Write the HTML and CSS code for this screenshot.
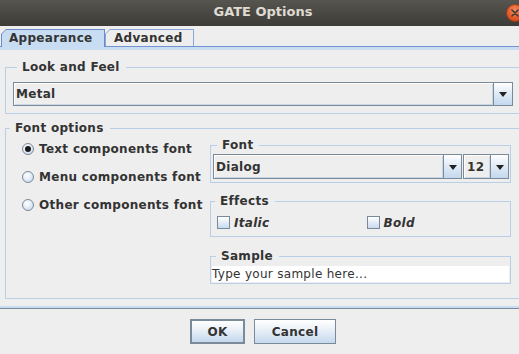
FILE: index.html
```html
<!DOCTYPE html>
<html>
<head>
<meta charset="utf-8">
<link rel="stylesheet" href="styles.css">
</head>
<body>
<div class="window">
  <div class="titlebar">
    <span></span>
    <span class="title">GATE Options</span>
    <span class="close-wrap">
      <svg class="close" width="18" height="18" viewBox="0 0 18 18">
        <defs>
          <radialGradient id="cg" cx="50%" cy="35%" r="60%">
            <stop offset="0" stop-color="#f7895c"/>
            <stop offset="1" stop-color="#dc4a1a"/>
          </radialGradient>
        </defs>
        <circle cx="9" cy="9" r="8.5" fill="url(#cg)" stroke="#9b3a17" stroke-width="0.8"/>
        <path d="M6 6 L12 12 M12 6 L6 12" stroke="#3c3b37" stroke-width="1.6" stroke-linecap="round"/>
      </svg>
    </span>
  </div>

  <div class="tabstrip">
    <div class="tab selected"><div class="tab-in">Appearance</div></div>
    <div class="tab"><div class="tab-in">Advanced</div></div>
  </div>
  <div class="tabline"></div>

  <div class="tabbody">
    <fieldset class="group lnf">
      <legend>Look and Feel</legend>
      <div class="combo">
        <div class="combo-text">Metal</div>
        <div class="combo-btn"><span class="tri"></span></div>
      </div>
    </fieldset>

    <fieldset class="group fontopts">
      <legend>Font options</legend>
      <div class="fo-body">
        <div class="radios">
          <div class="radio-row"><span class="radio checked"></span><span>Text components font</span></div>
          <div class="radio-row"><span class="radio"></span><span>Menu components font</span></div>
          <div class="radio-row"><span class="radio"></span><span>Other components font</span></div>
        </div>
        <div class="rightcol">
          <fieldset class="group sub font">
            <legend>Font</legend>
            <div class="font-row">
              <div class="combo tall dialog">
                <div class="combo-text">Dialog</div>
                <div class="combo-btn narrow"><span class="tri"></span></div>
              </div>
              <div class="combo tall size">
                <div class="combo-text">12</div>
                <div class="combo-btn narrow"><span class="tri"></span></div>
              </div>
            </div>
          </fieldset>
          <fieldset class="group sub effects">
            <legend>Effects</legend>
            <div class="effects-row">
              <div class="check-item"><span class="check"></span><span class="ital">Italic</span></div>
              <div class="check-item"><span class="check"></span><span class="ital">Bold</span></div>
            </div>
          </fieldset>
          <fieldset class="group sub sample">
            <legend>Sample</legend>
            <div class="sample-field">Type your sample here...</div>
          </fieldset>
        </div>
      </div>
    </fieldset>
  </div>
  <div class="bottomband"></div>

  <div class="buttons">
    <div class="btn default">OK</div>
    <div class="btn">Cancel</div>
  </div>
</div>
</body>
</html>
```

FILE: styles.css
```css
html, body {
  margin: 0;
  padding: 0;
  overflow: hidden;
  background: #eeeeee;
}
.window {
  width: 526px;
  height: 354px;
  background: #eeeeee;
  font-family: "DejaVu Sans", sans-serif;
  font-size: 12px;
  font-weight: bold;
  color: #333333;
  letter-spacing: 0.3px;
}

/* title bar */
.titlebar {
  height: 26px;
  display: grid;
  grid-template-columns: 1fr auto 1fr;
  align-items: center;
  background: linear-gradient(#57554f, #3c3b37);
}
.title {
  font-size: 13px;
  line-height: 24px;
  color: #dfdbd2;
  padding-bottom: 2px;
  letter-spacing: 0;
}
.close-wrap {
  justify-self: end;
  display: flex;
  margin-right: 2px;
}

/* tabs */
.tabstrip {
  height: 20px;
  display: flex;
  align-items: flex-end;
  padding-left: 1px;
}
.tab {
  height: 17px;
  box-sizing: border-box;
  padding: 1px 1px 0 1px;
  background: #8aa6d6;
  clip-path: polygon(0 5px, 5px 0, 100% 0, 100% 100%, 0 100%);
}
.tab-in {
  height: 100%;
  box-sizing: border-box;
  padding-top: 1px;
  line-height: 14px;
  background: #eeeeee;
  clip-path: polygon(0 4px, 4px 0, 100% 0, 100% 100%, 0 100%);
}
.tab.selected {
  width: 104px;
  height: 18px;
  margin-bottom: -1px;
  position: relative;
  z-index: 1;
  background: #6b8bc8;
  padding-bottom: 0;
}
.tab.selected .tab-in {
  background: #c8ddf2;
  padding-left: 7px;
}
.tab:not(.selected) {
  width: 89px;
}
.tab:not(.selected) .tab-in {
  padding-left: 8px;
}
.tabline {
  height: 3px;
  border-top: 1px solid #7494d1;
  background: #c8ddf2;
}

/* body */
.tabbody {
  padding: 10px 5px 7px 5px;
}
.group {
  margin: 0;
  padding: 0;
  border: 1px solid #b8cfe5;
  min-inline-size: 0;
}
.group > legend {
  margin-left: 4px;
  padding: 0 6px 0 5px;
  line-height: 15px;
  font-size: 12px;
}
.lnf {
  padding: 7px 7px 7px 7px;
}
.fontopts {
  margin-top: 7px;
}

/* combo */
.combo {
  height: 24px;
  box-sizing: border-box;
  border: 1px solid #7a8a99;
  display: flex;
  background: #eeeeee;
}
.combo.tall {
  height: 25px;
}
.combo-text {
  flex: 1;
  display: flex;
  align-items: center;
  padding-left: 2px;
  box-shadow: inset 1px 1px 0 #ffffff, inset -1px -1px 0 #c8d6e6;
}
.combo-btn {
  width: 18px;
  border-left: 1px solid #7a8a99;
  background: linear-gradient(#ffffff 0%, #e4edf7 40%, #c4d8ee 100%);
  display: flex;
  align-items: center;
  justify-content: center;
}
.combo-btn.narrow {
  width: 17px;
}
.tri {
  width: 0;
  height: 0;
  border-left: 4px solid transparent;
  border-right: 4px solid transparent;
  border-top: 5px solid #222222;
  margin-top: 1px;
}

/* font options */
.fo-body {
  display: flex;
  padding-right: 9px;
}
.radios {
  flex: 1;
  padding-left: 16px;
  margin-top: -1px;
}
.radio-row {
  height: 28px;
  display: flex;
  align-items: center;
  gap: 5px;
}
.radio {
  width: 12px;
  height: 12px;
  box-sizing: border-box;
  border-radius: 50%;
  border: 1px solid #7a8a99;
  background: radial-gradient(circle at 40% 35%, #ffffff 0%, #e2ebf5 50%, #bcd0e8 100%);
  display: flex;
  align-items: center;
  justify-content: center;
}
.radio.checked::after {
  content: "";
  width: 6px;
  height: 6px;
  border-radius: 50%;
  background: #1a1a1a;
}
.rightcol {
  width: 301px;
  padding-top: 2px;
  padding-bottom: 14px;
}
.sub > legend {
  margin-left: 4px;
}
.font {
  padding: 1px 1px 3px 2px;
}
.font-row {
  display: flex;
  gap: 1px;
}
.dialog {
  flex: 1;
}
.size {
  width: 46px;
}
.size .combo-text {
  padding-left: 3px;
}
.effects {
  margin-top: 11px;
  padding: 7px 0 7px 0;
}
.effects-row {
  display: grid;
  grid-template-columns: 1fr 1fr;
}
.check-item {
  display: flex;
  align-items: center;
  gap: 4px;
  padding-left: 6px;
  height: 13px;
}
.check {
  width: 13px;
  height: 13px;
  box-sizing: border-box;
  border: 1px solid #7a8a99;
  background: linear-gradient(#ffffff, #c8daee);
}
.ital {
  font-style: italic;
}
.sample {
  margin-top: 12px;
  padding: 2px 1px 1px 1px;
}
.sample-field {
  height: 16px;
  background: #ffffff;
  font-weight: normal;
  line-height: 16px;
  color: #333333;
}

.bottomband {
  height: 2px;
  background: #c8ddf2;
  border-bottom: 1px solid #7a8a99;
}

/* buttons */
.buttons {
  display: flex;
  justify-content: center;
  gap: 9px;
  padding-top: 10px;
}
.btn {
  height: 25px;
  box-sizing: border-box;
  border: 1px solid #7a8a99;
  background: linear-gradient(#ffffff 0%, #eef3f9 35%, #c4d8ee 100%);
  display: flex;
  align-items: center;
  justify-content: center;
  width: 82px;
}
.btn.default {
  width: 55px;
  border: 2px solid #7a8a99;
}
```
